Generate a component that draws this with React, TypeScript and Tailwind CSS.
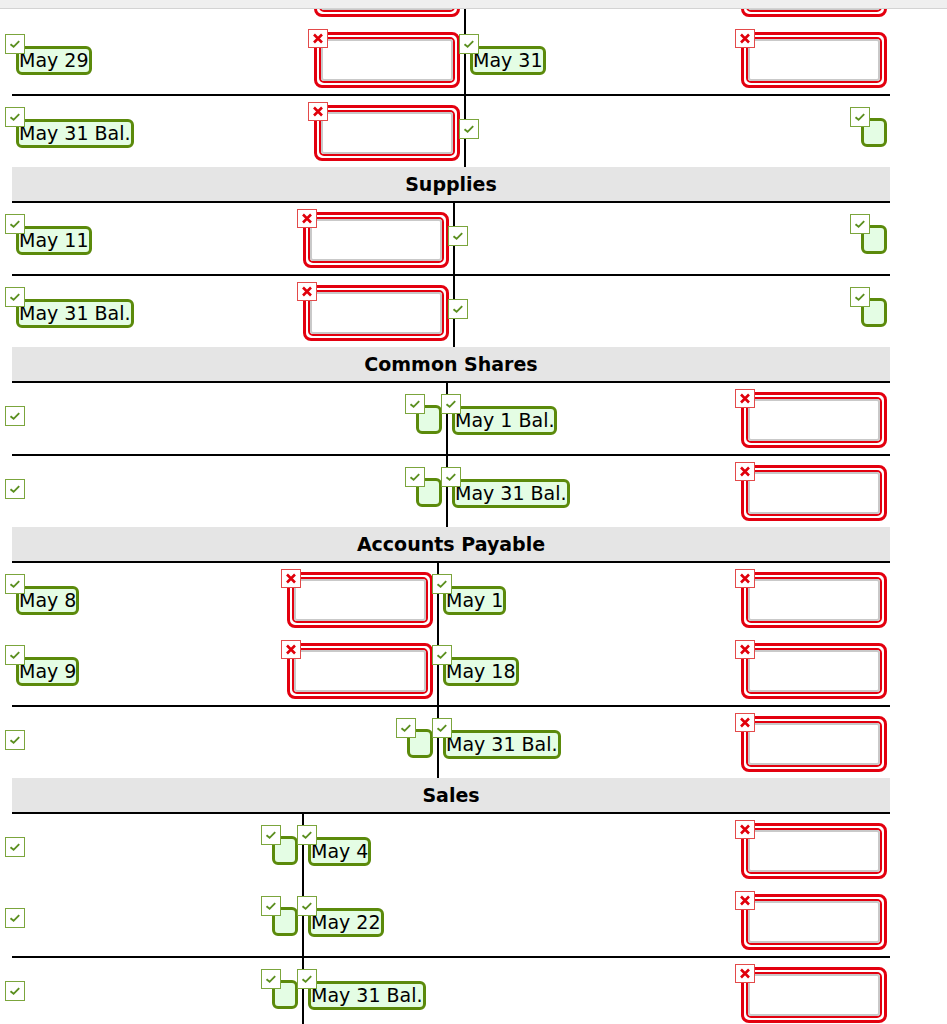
type Amount = 'red' | 'green';
type DateValue = string | null | 'blank';

interface Row {
  ld: DateValue;
  la: Amount;
  rd: DateValue;
  ra: Amount;
  line?: boolean;
}

interface Account {
  title: string | null;
  splitClass: string;
  rows: Row[];
}

const accounts: Account[] = [
  {
    title: null,
    splitClass: 'w-[452px]',
    rows: [
      { ld: 'blank', la: 'red', rd: 'blank', ra: 'red' },
      { ld: 'May 29', la: 'red', rd: 'May 31', ra: 'red' },
      { line: true, ld: 'May 31 Bal.', la: 'red', rd: null, ra: 'green' },
    ],
  },
  {
    title: 'Supplies',
    splitClass: 'w-[441px]',
    rows: [
      { ld: 'May 11', la: 'red', rd: null, ra: 'green' },
      { line: true, ld: 'May 31 Bal.', la: 'red', rd: null, ra: 'green' },
    ],
  },
  {
    title: 'Common Shares',
    splitClass: 'w-[434px]',
    rows: [
      { ld: null, la: 'green', rd: 'May 1 Bal.', ra: 'red' },
      { line: true, ld: null, la: 'green', rd: 'May 31 Bal.', ra: 'red' },
    ],
  },
  {
    title: 'Accounts Payable',
    splitClass: 'w-[425px]',
    rows: [
      { ld: 'May 8', la: 'red', rd: 'May 1', ra: 'red' },
      { ld: 'May 9', la: 'red', rd: 'May 18', ra: 'red' },
      { line: true, ld: null, la: 'green', rd: 'May 31 Bal.', ra: 'red' },
    ],
  },
  {
    title: 'Sales',
    splitClass: 'w-[290px]',
    rows: [
      { ld: null, la: 'green', rd: 'May 4', ra: 'red' },
      { ld: null, la: 'green', rd: 'May 22', ra: 'red' },
      { line: true, ld: null, la: 'green', rd: 'May 31 Bal.', ra: 'red' },
    ],
  },
];

function CheckBadge({ className }: { className: string }) {
  return (
    <div className={`absolute z-10 h-[20px] w-[20px] border border-[#7ba53c] bg-white ${className}`}>
      <svg width="18" height="18" viewBox="0 0 18 18" className="block">
        <path d="M4.5 9.2 L7.6 11.8 L13.2 6.2" fill="none" stroke="#5b8f1f" strokeWidth="1.9" />
      </svg>
    </div>
  );
}

function CrossBadge() {
  return (
    <div className="absolute -left-[9px] -top-[6px] z-10 h-[19px] w-[20px] border border-[#e34a4a] bg-white">
      <svg width="18" height="17" viewBox="0 0 18 17" className="block">
        <path d="M5 4.5 L13 12.5 M13 4.5 L5 12.5" fill="none" stroke="#e0000b" strokeWidth="2.6" />
      </svg>
    </div>
  );
}

function DateCell({ value }: { value: DateValue }) {
  if (value === 'blank') return <div className="w-0" />;
  if (value === null) {
    return (
      <div className="relative mt-[23px] h-0 w-0">
        <CheckBadge className="-left-[11px] top-0" />
      </div>
    );
  }
  return (
    <div className="relative mt-[23px] h-[29px] whitespace-nowrap rounded-[6px] border-[3px] border-[#5b8a0b] bg-[#e4fde4] text-[19px] leading-[23px] text-black">
      {value}
      <CheckBadge className="-left-[14px] -top-[15px]" />
    </div>
  );
}

function AmountCell({ kind }: { kind: Amount }) {
  if (kind === 'green') {
    return (
      <div className="relative mt-[22px] h-[29px] w-[26px] shrink-0 rounded-[6px] border-[3px] border-[#5b8a0b] bg-[#e4fde4]">
        <CheckBadge className="-left-[14px] -top-[14px]" />
      </div>
    );
  }
  return (
    <div className="relative mt-[9px] h-[56px] w-[146px] shrink-0 rounded-[8px] border-[3px] border-[#e3000f] bg-white p-[2px]">
      <div className="h-full rounded-[5px] border-2 border-[#e3000f]">
        <div className="h-full rounded-[3px] border-2 border-[#c9c9c9] bg-white" />
      </div>
      <CrossBadge />
    </div>
  );
}

function TAccount({ account }: { account: Account }) {
  return (
    <div>
      {account.title ? (
        <>
          <div className="flex h-[34px] items-center justify-center bg-[#e5e5e5] text-[19px] font-bold text-black">
            {account.title}
          </div>
          <div className="h-[2px] bg-black" />
        </>
      ) : null}
      {account.rows.map((row, i) => (
        <div key={i}>
          {row.line ? <div className="h-[2px] bg-black" /> : null}
          <div className="flex h-[71px] items-start">
            <div className={`${account.splitClass} flex h-full shrink-0 items-start justify-between pl-[4px] pr-[4px]`}>
              <DateCell value={row.ld} />
              <AmountCell kind={row.la} />
            </div>
            <div className="flex h-full flex-1 items-start justify-between border-l-2 border-black pl-[4px] pr-[3px]">
              <DateCell value={row.rd} />
              <AmountCell kind={row.ra} />
            </div>
          </div>
        </div>
      ))}
    </div>
  );
}

export default function App() {
  return (
    <div
      className="relative h-[1024px] w-[947px] overflow-hidden bg-white"
      style={{ fontFamily: '"DejaVu Sans", Verdana, sans-serif' }}
    >
      <div className="-mt-[48px] ml-[12px] w-[878px]">
        {accounts.map((account, i) => (
          <TAccount key={i} account={account} />
        ))}
      </div>
      <div className="absolute inset-x-0 top-0 z-20 h-[9px] border-b border-[#d3d3d3] bg-[#efefef]" />
    </div>
  );
}
